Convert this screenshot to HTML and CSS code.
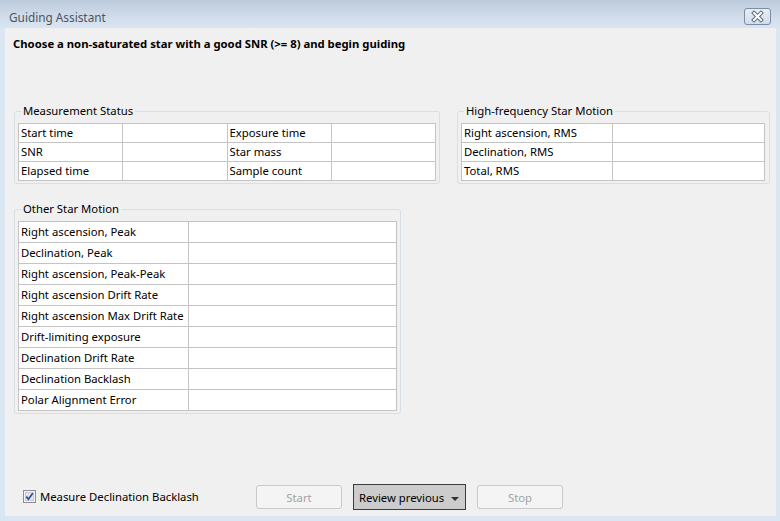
FILE: index.html
```html
<!DOCTYPE html>
<html>
<head>
<meta charset="utf-8">
<link rel="stylesheet" href="styles.css">
</head>
<body>
<div class="window">
  <div class="titlebar">
    <span class="title">Guiding Assistant</span>
    <span class="close">
      <svg width="27" height="17" viewBox="0 0 27 17">
        <path d="M10 5 L17 12 M17 5 L10 12" stroke="#5b6a80" stroke-width="4" stroke-linecap="square"/>
        <path d="M10 5 L17 12 M17 5 L10 12" stroke="#ffffff" stroke-width="2" stroke-linecap="square"/>
      </svg>
    </span>
  </div>
  <div class="client">
    <div class="heading">Choose a non-saturated star with a good SNR (&gt;= 8) and begin guiding</div>
    <div class="toprow">
      <fieldset class="group g-status">
        <legend>Measurement Status</legend>
        <table class="grid short">
          <tr><td>Start time</td><td></td><td>Exposure time</td><td></td></tr>
          <tr><td>SNR</td><td></td><td>Star mass</td><td></td></tr>
          <tr><td>Elapsed time</td><td></td><td>Sample count</td><td></td></tr>
        </table>
      </fieldset>
      <fieldset class="group g-hf">
        <legend>High-frequency Star Motion</legend>
        <table class="grid short hf">
          <tr><td>Right ascension, RMS</td><td></td></tr>
          <tr><td>Declination, RMS</td><td></td></tr>
          <tr><td>Total, RMS</td><td></td></tr>
        </table>
      </fieldset>
    </div>
    <fieldset class="group g-other">
      <legend>Other Star Motion</legend>
      <table class="grid tall">
        <tr><td>Right ascension, Peak</td><td></td></tr>
        <tr><td>Declination, Peak</td><td></td></tr>
        <tr><td>Right ascension, Peak-Peak</td><td></td></tr>
        <tr><td>Right ascension Drift Rate</td><td></td></tr>
        <tr><td>Right ascension Max Drift Rate</td><td></td></tr>
        <tr><td>Drift-limiting exposure</td><td></td></tr>
        <tr><td>Declination Drift Rate</td><td></td></tr>
        <tr><td>Declination Backlash</td><td></td></tr>
        <tr><td>Polar Alignment Error</td><td></td></tr>
      </table>
    </fieldset>
    <div class="bottom">
      <label class="check">
        <svg class="box" width="13" height="13" viewBox="0 0 13 13">
          <rect x="0.5" y="0.5" width="12" height="12" fill="#f4f4f4" stroke="#8e8f8f"/>
          <rect x="2.5" y="2.5" width="8" height="8" fill="#dfe3ea" stroke="#c5cad3"/>
          <path d="M3.3 6.6 L5.4 9.2 L9.8 3.2" fill="none" stroke="#2b4b9b" stroke-width="1.7"/>
        </svg>
        <span>Measure Declination Backlash</span>
      </label>
      <button class="btn disabled b-start">Start</button>
      <button class="btn review">Review previous <span class="arrow"></span></button>
      <button class="btn disabled b-stop">Stop</button>
    </div>
  </div>
</div>
</body>
</html>
```

FILE: styles.css
```css
html, body {
  margin: 0;
  padding: 0;
}
body {
  width: 780px;
  height: 521px;
  overflow: hidden;
  font-family: "Noto Sans", "Open Sans", sans-serif;
  font-size: 11.3px;
  color: #000;
}
.window {
  width: 780px;
  height: 521px;
  background: #dbe6f3;
  display: flex;
  flex-direction: column;
}
.titlebar {
  height: 28px;
  flex: none;
  display: flex;
  align-items: flex-start;
  justify-content: space-between;
  background: linear-gradient(#bccbdc, #d0dcea 60%, #dae5f2);
}
.title {
  margin: 9px 0 0 9px;
  color: #4d5560;
  font-size: 11.8px;
  line-height: 16px;
}
.close {
  margin: 8px 9px 0 0;
  width: 27px;
  height: 17px;
  box-sizing: border-box;
  border: 1px solid #7c8ca4;
  border-radius: 3px;
  background: linear-gradient(#e6edf6, #d3ddea);
  display: flex;
  align-items: center;
  justify-content: center;
  overflow: hidden;
}
.close svg {
  display: block;
  flex: none;
}
.client {
  margin: 0 4px 5px 5px;
  height: 488px;
  background: #f0f0f0;
  display: flex;
  flex-direction: column;
}
.heading {
  font-weight: bold;
  line-height: 16px;
  margin: 8px 0 0 8px;
}
.toprow {
  display: flex;
  gap: 17px;
  margin: 51px 0 0 9px;
}
.group {
  margin: 0;
  border: 1px solid #d8dfe4;
  border-radius: 3px;
  padding: 0 3px 2px 3px;
  min-width: 0;
}
.group legend {
  padding: 0 2px;
  margin-left: 3px;
  line-height: 16px;
}
.g-status { width: 426px; box-sizing: border-box; }
.g-hf { width: 313px; box-sizing: border-box; }
.g-other {
  width: 387px;
  box-sizing: border-box;
  margin: 17px 0 0 9px;
}
.grid {
  border-collapse: collapse;
  background: #fff;
  border: 1px solid #a8a8a8;
  margin-top: 4px;
  table-layout: fixed;
}
.grid td {
  border: 1px solid #c4c4c4;
  padding: 0 0 0 2px;
  white-space: nowrap;
  overflow: hidden;
}
.short { width: 418px; }
.short td { height: 18px; line-height: 18px; width: 25%; }
.short.hf { width: 304px; }
.hf td:first-child { width: 49.7%; }
.hf td:last-child { width: 50.3%; }
.tall { width: 379px; }
.tall td { height: 20px; line-height: 20px; }
.tall td:first-child { width: 44.9%; }
.tall td:last-child { width: 55.1%; }
.bottom {
  margin-top: auto;
  height: 24px;
  margin-bottom: 7px;
  display: flex;
  align-items: center;
}
.check {
  display: flex;
  align-items: center;
  margin-left: 18px;
  margin-top: -2px;
  width: 233px;
  gap: 4px;
}
.check .box { display: block; flex: none; }
.btn {
  font-family: inherit;
  font-size: 11.3px;
  height: 24px;
  box-sizing: border-box;
  padding: 0;
  border-radius: 3px;
  display: flex;
  align-items: center;
  justify-content: center;
}
.disabled {
  width: 86px;
  border: 1px solid #c9c9c9;
  background: #f4f4f4;
  color: #a3a3a3;
}
.b-start { margin-right: 11px; }
.review {
  width: 113px;
  height: 26px;
  border: 1px solid #3c3c3c;
  border-radius: 0;
  background: #cccccc;
  color: #000;
  justify-content: flex-start;
  padding-left: 5px;
  margin-right: 11px;
}
.arrow {
  width: 0;
  height: 0;
  border-left: 4px solid transparent;
  border-right: 4px solid transparent;
  border-top: 4px solid #333;
  margin-left: 7px;
  margin-top: 3px;
}
```
